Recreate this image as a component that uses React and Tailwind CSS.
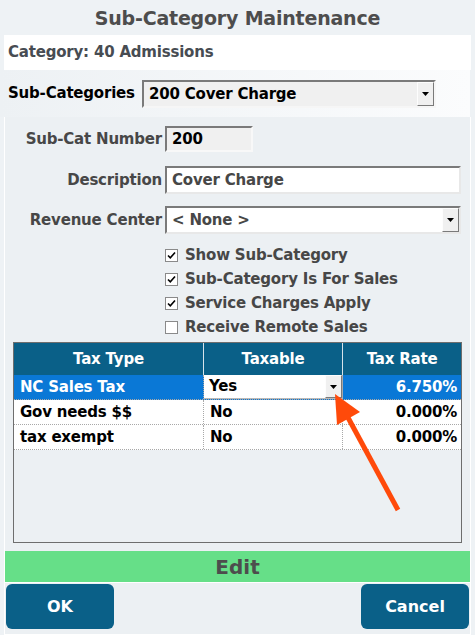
import React from "react";

const font = "font-['DejaVu_Sans','Verdana',sans-serif]";

function DropButton({ className = "" }) {
  return (
    <div
      className={`flex items-center justify-center bg-[#f0f0f0] border border-t-[#fdfdfd] border-l-[#fdfdfd] border-b-[#7a7a7a] border-r-[#7a7a7a] ${className}`}
    >
      <svg width="7" height="4" viewBox="0 0 7 4">
        <path d="M0 0h7L3.5 4z" fill="#000" />
      </svg>
    </div>
  );
}

function Check({ checked, label }) {
  return (
    <div className="flex items-center h-[24px]">
      <div className="w-[13px] h-[13px] bg-white border border-[#8a8a8a] flex items-center justify-center">
        {checked && (
          <svg width="9" height="9" viewBox="0 0 9 9">
            <path d="M1 4.5l2.3 2.4L8 1.5" stroke="#000" strokeWidth="1.6" fill="none" />
          </svg>
        )}
      </div>
      <span className="ml-[7px] text-[15px] font-bold text-[#474747] tracking-[-0.2px]">{label}</span>
    </div>
  );
}

const rows = [
  { type: "NC Sales Tax", taxable: "Yes", rate: "6.750%", selected: true },
  { type: "Gov needs $$", taxable: "No", rate: "0.000%" },
  { type: "tax exempt", taxable: "No", rate: "0.000%" },
];

export default function App() {
  return (
    <div className={`relative w-[475px] h-[635px] bg-[#eef2f5] flex flex-col ${font} overflow-hidden`}>
      {/* title */}
      <div className="h-[35px] flex items-center justify-center text-[19px] font-bold text-[#4d4d4d] tracking-[-0.2px] pt-[1px]">
        Sub-Category Maintenance
      </div>

      {/* category */}
      <div className="mx-[4px] h-[35px] bg-white flex items-center px-[4px] text-[15px] font-bold text-[#474c52] tracking-[-0.2px]">
        Category: 40 Admissions
      </div>

      {/* sub-category selector */}
      <div className="mr-[5px] h-[47px] bg-gradient-to-r from-[#edf1f4] to-[#fbfcfd] flex items-center pl-[8px]">
        <span className="w-[134px] text-[15px] font-bold text-black tracking-[-0.2px]">Sub-Categories</span>
        <div className="w-[294px] h-[28px] flex bg-[#f0f0f0] border-2 border-t-[#7a7a7a] border-l-[#7a7a7a] border-b-[#f6f6f6] border-r-[#f6f6f6]">
          <span className="flex-1 pl-[5px] text-[15px] font-bold text-black leading-[24px] tracking-[-0.2px]">200 Cover Charge</span>
          <DropButton className="w-[17px] h-[24px]" />
        </div>
      </div>

      {/* main panel */}
      <div className="mx-[4px] flex-1 flex flex-col bg-[#ecf0f3] border-l border-b border-r border-white">
        <div className="flex flex-col pt-[9px] tracking-[-0.2px]">
          <div className="flex items-center">
            <label className="w-[157px] text-right text-[15px] font-bold text-[#474747]">Sub-Cat Number</label>
            <div className="ml-[3px] w-[88px] h-[26px] bg-[#f0f0f0] border-2 border-t-[#7a7a7a] border-l-[#7a7a7a] border-b-[#f8f8f8] border-r-[#f8f8f8] pl-[5px] text-[15px] font-bold text-black leading-[22px]">
              200
            </div>
          </div>
          <div className="flex items-center mt-[14px]">
            <label className="w-[157px] text-right text-[15px] font-bold text-[#474747]">Description</label>
            <div className="ml-[3px] w-[296px] h-[28px] bg-white border-2 border-t-[#7a7a7a] border-l-[#7a7a7a] border-b-[#e8e8e8] border-r-[#e8e8e8] pl-[5px] text-[15px] font-bold text-[#474747] leading-[24px]">
              Cover Charge
            </div>
          </div>
          <div className="flex items-center mt-[12px]">
            <label className="w-[157px] text-right text-[15px] font-bold text-[#474747]">Revenue Center</label>
            <div className="ml-[3px] w-[296px] h-[28px] flex bg-white border-2 border-t-[#7a7a7a] border-l-[#7a7a7a] border-b-[#e8e8e8] border-r-[#e8e8e8]">
              <span className="flex-1 pl-[5px] text-[15px] font-bold text-[#474747] leading-[24px]">&lt; None &gt;</span>
              <DropButton className="w-[17px] h-[24px]" />
            </div>
          </div>
          <div className="flex flex-col ml-[160px] mt-[9px]">
            <Check checked label="Show Sub-Category" />
            <Check checked label="Sub-Category Is For Sales" />
            <Check checked label="Service Charges Apply" />
            <Check label="Receive Remote Sales" />
          </div>
        </div>

        {/* tax grid */}
        <div className="ml-[8px] mt-[3px] w-[449px] h-[201px] border border-[#6e6e6e] bg-[#ecf0f3] flex flex-col tracking-[-0.2px]">
          <div className="flex h-[32px] bg-[#0a6088] text-white text-[15px] font-bold">
            <div className="w-[190px] border-r border-[#d7e3ea] flex items-center justify-center">Tax Type</div>
            <div className="w-[139px] border-r border-[#d7e3ea] flex items-center justify-center">Taxable</div>
            <div className="flex-1 flex items-center justify-center">Tax Rate</div>
          </div>
          {rows.map((r) => (
            <div
              key={r.type}
              className={`flex h-[25px] text-[15px] font-bold border-b border-dotted border-[#a8a8a8] ${
                r.selected ? "bg-[#0a78d6] text-white" : "bg-white text-black"
              }`}
            >
              <div className="w-[190px] pl-[6px] flex items-center border-r border-dotted border-[#a8a8a8]">{r.type}</div>
              {r.selected ? (
                <div className="w-[139px] flex bg-white text-black border-r border-[#a8a8a8] border-b border-b-[#b8b8b8]">
                  <span className="flex-1 pl-[5px] flex items-center">{r.taxable}</span>
                  <DropButton className="w-[17px] h-[23px]" />
                </div>
              ) : (
                <div className="w-[139px] pl-[6px] flex items-center border-r border-dotted border-[#a8a8a8]">{r.taxable}</div>
              )}
              <div className="flex-1 pr-[4px] flex items-center justify-end">{r.rate}</div>
            </div>
          ))}
        </div>

        {/* edit strip */}
        <div className="mt-[8px] h-[32px] bg-[#66df88] border-b border-white flex items-center justify-center text-[20px] font-bold text-[#4d4d4d]">
          Edit
        </div>

        {/* buttons */}
        <div className="flex justify-between px-[1px] mt-[1px]">
          <button className="w-[108px] h-[45px] rounded-[6px] bg-[#0a6088] text-white text-[16px] font-bold">OK</button>
          <button className="w-[108px] h-[45px] rounded-[6px] bg-[#0a6088] text-white text-[16px] font-bold">Cancel</button>
        </div>
      </div>

      {/* callout arrow */}
      <svg className="absolute left-0 top-0 pointer-events-none" width="475" height="635" viewBox="0 0 475 635">
        <line x1="398" y1="510" x2="345" y2="412" stroke="#ff4a0a" strokeWidth="5" />
        <path d="M335 394 L337 425 L360 412 Z" fill="#ff4a0a" />
      </svg>
    </div>
  );
}
